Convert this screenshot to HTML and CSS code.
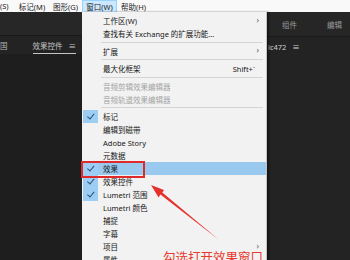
FILE: index.html
```html
<!DOCTYPE html>
<html lang="zh-CN">
<head>
  <meta charset="UTF-8">
  <meta name="viewport" content="width=device-width, initial-scale=1.0">
  <title>窗口菜单 - 效果</title>
  <link rel="stylesheet" href="styles.css">
</head>
<body>
  <div class="app">
    <div class="menubar">
      <span class="menubar-item first">(S)</span>
      <span class="menubar-item">标记(M)</span>
      <span class="menubar-item">图形(G)</span>
      <span class="menubar-item open">窗口(W)</span>
      <span class="menubar-item">帮助(H)</span>
    </div>

    <div class="workspace">
      <div class="panel panel-left">
        <div class="panel-top"></div>
        <div class="panel-tabs">
          <span class="tab">国</span>
          <span class="tab tab-active">效果控件 <span class="tab-menu">≡</span></span>
        </div>
        <div class="panel-body"></div>
      </div>

      <div class="dropdown">
        <div class="menu-item submenu"><span class="check"></span>工作区(W)</div>
        <div class="menu-item"><span class="check"></span>查找有关 Exchange 的扩展功能...</div>
        <div class="menu-sep"></div>
        <div class="menu-item submenu"><span class="check"></span>扩展</div>
        <div class="menu-sep"></div>
        <div class="menu-item"><span class="check"></span>最大化框架<span class="shortcut">Shift+`</span></div>
        <div class="menu-sep"></div>
        <div class="menu-item disabled"><span class="check"></span>音频剪辑效果编辑器</div>
        <div class="menu-item disabled"><span class="check"></span>音频轨道效果编辑器</div>
        <div class="menu-sep"></div>
        <div class="menu-item checked"><span class="check"></span>标记</div>
        <div class="menu-item"><span class="check"></span>编辑到磁带</div>
        <div class="menu-item"><span class="check"></span>Adobe Story</div>
        <div class="menu-item"><span class="check"></span>元数据</div>
        <div class="menu-item checked hover"><span class="check"></span>效果</div>
        <div class="menu-item checked"><span class="check"></span>效果控件</div>
        <div class="menu-item checked"><span class="check"></span>Lumetri 范围</div>
        <div class="menu-item"><span class="check"></span>Lumetri 颜色</div>
        <div class="menu-item"><span class="check"></span>捕捉</div>
        <div class="menu-item"><span class="check"></span>字幕</div>
        <div class="menu-item submenu"><span class="check"></span>项目</div>
        <div class="menu-item"><span class="check"></span>属性</div>
      </div>

      <div class="panel panel-right">
        <div class="panel-top header-tabs">
          <span>组件</span>
          <span>编辑</span>
        </div>
        <div class="panel-tabs">
          <span class="tab tab-light">ic472 <span class="tab-menu">≡</span></span>
        </div>
        <div class="panel-body"></div>
      </div>
    </div>

    <!-- annotation on top of the screenshot -->
    <div class="callout-box"></div>
    <svg class="callout-arrow" width="350" height="260" viewBox="0 0 350 260">
      <polygon points="151,185 164,190 162.3,192.4 218.5,239.5 160.4,194.6 158.6,197.4" fill="#e5302b"/>
    </svg>
    <div class="callout-text">勾选打开效果窗口</div>
  </div>
</body>
</html>
```

FILE: styles.css
```css
body {
  margin: 0;
  padding: 0;
  font-family: "Noto Sans", "Noto Sans CJK SC", sans-serif;
  background-color: #1e1e1e;
  overflow: hidden;
}

.app {
  position: relative;
  width: 350px;
  height: 260px;
  display: flex;
  flex-direction: column;
  overflow: hidden;
}

/* top menu bar */
.menubar {
  height: 15px;
  display: grid;
  grid-template-columns: 15px 34px 33px 35px 33px;
  background: #f9f9f9;
  font-size: 7.5px;
  color: #1b1b1b;
}

.menubar-item {
  display: flex;
  align-items: center;
  justify-content: center;
  box-sizing: border-box;
}

.menubar-item.first {
  justify-content: flex-start;
}

.menubar-item.open {
  background: #cce8ff;
  border: 1px solid #99d1ff;
  border-bottom: none;
}

.workspace {
  flex: 1;
  display: flex;
}

/* dark panels */
.panel {
  display: flex;
  flex-direction: column;
  color: #b5b5b5;
  font-size: 7.5px;
}

.panel-left {
  width: 82px;
  flex-shrink: 0;
}

.panel-right {
  flex: 1;
  background: #232323;
}

.panel-top {
  height: 23px;
  background: #272727;
  border-bottom: 1px solid #1a1a1a;
}

.panel-tabs {
  height: 18px;
  display: flex;
  align-items: center;
  background: #232323;
}

.panel-left .panel-tabs {
  gap: 25px;
}

.panel-body {
  flex: 1;
  background: #1e1e1e;
}

.panel-right .panel-body {
  background: #232323;
}

.tab-active {
  padding-bottom: 2px;
  margin-top: 4px;
  border-bottom: 1px solid #c6c6c6;
  color: #c4c4c4;
}

.tab-menu {
  margin-left: 4px;
}

.tab-light {
  color: #cfcfcf;
  margin-left: 1px;
}

.header-tabs {
  height: 24px;
  display: flex;
  align-items: center;
  gap: 30px;
  padding-left: 15px;
  color: #9b9b9b;
  background: #262626;
}

/* window dropdown */
.dropdown {
  width: 184px;
  flex-shrink: 0;
  padding-top: 2px;
  background: #f2f2f2;
  border-right: 1px solid #c2c2c2;
  box-shadow: 2px 0 2px rgba(0, 0, 0, 0.45);
  font-size: 7.5px;
  color: #161616;
  z-index: 1;
}

.menu-item {
  height: 13px;
  display: flex;
  align-items: center;
  padding-right: 7px;
  white-space: nowrap;
}

.menu-item.disabled {
  color: #a4a4a4;
}

.menu-item.hover {
  background: #99c9ef;
}

.check {
  width: 15px;
  height: 13px;
  margin-left: 1px;
  margin-right: 5px;
  display: flex;
  align-items: center;
  justify-content: center;
  flex-shrink: 0;
}

.checked .check {
  background: #9dcdf3;
}

.checked .check::before {
  content: "";
  width: 2.5px;
  height: 5.5px;
  margin-top: -2px;
  border: solid #2a4f78;
  border-width: 0 1.2px 1.2px 0;
  transform: rotate(40deg);
}

.submenu::after {
  content: "›";
  margin-left: auto;
  color: #555555;
  font-size: 8px;
  margin-top: -3px;
}

.shortcut {
  margin-left: auto;
  margin-right: 4px;
}

.menu-sep {
  height: 1px;
  margin: 1.75px 3px 1.75px 19px;
  background: #d4d4d4;
}

/* red annotation */
.callout-box {
  position: absolute;
  left: 81px;
  top: 161px;
  width: 64px;
  height: 17px;
  box-sizing: border-box;
  border: 2px solid #e02a2a;
  z-index: 2;
}

.callout-arrow {
  position: absolute;
  left: 0;
  top: 0;
  z-index: 2;
}

.callout-text {
  position: absolute;
  left: 163px;
  top: 251px;
  font-family: "Noto Sans CJK SC", sans-serif;
  font-size: 12.5px;
  line-height: 1;
  color: #e8392e;
  white-space: nowrap;
  z-index: 2;
}
```
